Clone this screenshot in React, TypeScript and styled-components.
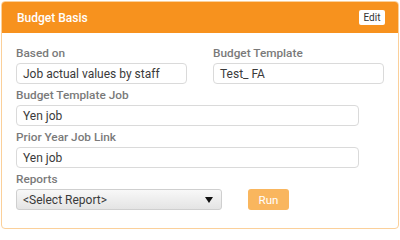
import styled, { createGlobalStyle } from 'styled-components';

const GlobalStyle = createGlobalStyle`
  body {
    margin: 0;
    padding: 1px;
    background: #fff;
    font-family: Roboto, "Liberation Sans", sans-serif;
  }
`;

const Card = styled.div`
  width: 396px;
  height: 226px;
  border: 1px solid #fbd09a;
  border-radius: 4px;
  overflow: hidden;
  box-sizing: content-box;
`;

const Header = styled.div`
  height: 31px;
  background: #f7921e;
  display: flex;
  align-items: center;
  justify-content: space-between;
  padding: 0 13px 0 15px;
`;

const Title = styled.div`
  color: #fff;
  font-size: 12px;
  font-weight: 500;
`;

const EditButton = styled.button`
  width: 26px;
  height: 15px;
  padding: 0;
  border: none;
  border-radius: 2px;
  background: #fff;
  color: #333;
  font-family: inherit;
  font-size: 10px;
  line-height: 15px;
`;

const Body = styled.div`
  padding: 13px 14px 0 14px;
`;

const Row = styled.div`
  display: flex;
  gap: 26px;
`;

const Field = styled.div<{ $width: number }>`
  width: ${p => p.$width}px;
  display: flex;
  flex-direction: column;
`;

const Label = styled.div`
  height: 14px;
  line-height: 14px;
  font-size: 11.8px;
  font-weight: 500;
  color: #7a7a7a;
  margin-bottom: 3px;
`;

const Input = styled.div`
  height: 21px;
  box-sizing: border-box;
  border: 1px solid #dadada;
  border-radius: 4px;
  padding: 0 6px;
  display: flex;
  align-items: center;
  font-size: 12px;
  color: #3a3a3a;
  margin-bottom: 4px;
`;

const SelectRow = styled.div`
  display: flex;
  align-items: center;
  gap: 26px;
`;

const Select = styled.div`
  width: 206px;
  height: 21px;
  box-sizing: border-box;
  border: 1px solid #cfcfcf;
  border-radius: 3px;
  background: linear-gradient(#f8f8f8, #e4e4e4);
  display: flex;
  align-items: center;
  justify-content: space-between;
  padding: 0 8px 0 6px;
  font-size: 12px;
  color: #3a3a3a;
`;

const Arrow = styled.span`
  width: 0;
  height: 0;
  border-left: 4px solid transparent;
  border-right: 4px solid transparent;
  border-top: 6px solid #111;
`;

const RunButton = styled.button`
  width: 41px;
  height: 21px;
  border: none;
  border-radius: 3px;
  background: #f9b65e;
  color: #fff;
  font-family: inherit;
  font-size: 11.5px;
  padding: 0;
`;

export default function App() {
  return (
    <>
      <GlobalStyle />
      <Card>
        <Header>
          <Title>Budget Basis</Title>
          <EditButton>Edit</EditButton>
        </Header>
        <Body>
          <Row>
            <Field $width={172}>
              <Label>Based on</Label>
              <Input>Job actual values by staff</Input>
            </Field>
            <Field $width={172}>
              <Label>Budget Template</Label>
              <Input>Test_ FA</Input>
            </Field>
          </Row>
          <Field $width={343}>
            <Label>Budget Template Job</Label>
            <Input>Yen job</Input>
          </Field>
          <Field $width={343}>
            <Label>Prior Year Job Link</Label>
            <Input>Yen job</Input>
          </Field>
          <Field $width={370}>
            <Label>Reports</Label>
            <SelectRow>
              <Select>
                <span>&lt;Select Report&gt;</span>
                <Arrow />
              </Select>
              <RunButton>Run</RunButton>
            </SelectRow>
          </Field>
        </Body>
      </Card>
    </>
  );
}
